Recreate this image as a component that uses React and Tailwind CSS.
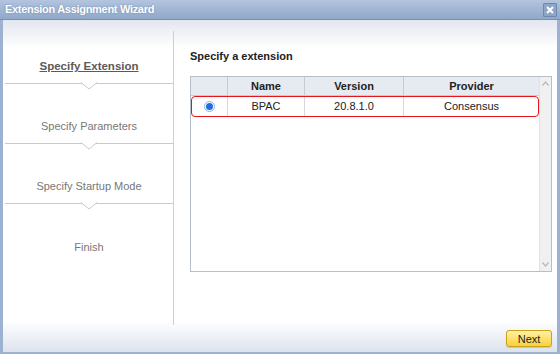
import React from 'react';

const steps = [
  { label: 'Specify Extension', active: true },
  { label: 'Specify Parameters' },
  { label: 'Specify Startup Mode' },
  { label: 'Finish', last: true },
];

const Chevron = () => (
  <svg className="absolute left-1/2 -translate-x-1/2 -bottom-[7px]" width="16" height="8" viewBox="0 0 16 8">
    <polyline points="0,0.5 8,7 16,0.5" fill="#ffffff" stroke="#c9c9c9" strokeWidth="1" />
  </svg>
);

const App = () => {
  return (
    <div className="w-[560px] h-[354px] flex flex-col bg-white font-['Liberation_Sans',Arial,sans-serif] overflow-hidden">
      {/* title bar */}
      <div className="h-[20px] flex items-center justify-between pl-[5px] pr-[3px] bg-[linear-gradient(to_bottom,#b3c4de,#90a8ca)] border-b border-[#7890b8]">
        <span className="text-white text-[11px] tracking-[-0.3px] font-bold [text-shadow:0_0_2px_#6c84ac]">Extension Assignment Wizard</span>
        <div className="w-[14px] h-[14px] flex items-center justify-center bg-[#8ea5c8] border border-[#6f88b0] rounded-[1px]">
          <svg width="8" height="8" viewBox="0 0 8 8">
            <path d="M1 1 L7 7 M7 1 L1 7" stroke="#ffffff" strokeWidth="2" />
          </svg>
        </div>
      </div>

      {/* body */}
      <div className="flex-1 flex flex-col border-l-[3px] border-r-[3px] border-b-[2px] border-[#9db2d2] bg-[linear-gradient(to_bottom,#e2e6ee_0px,#ffffff_28px,#ffffff_300px,#dde3ed_100%)]">
        <div className="flex flex-1">
          {/* steps */}
          <div className="w-[171px] mt-[11px] h-[294px] border-r border-[#cfcfcf] flex flex-col pl-[2px]">
            {steps.map((s) => (
              <div
                key={s.label}
                className={`relative flex flex-col justify-end items-center pb-[9px] ${s.active ? 'h-[53px]' : 'h-[60px]'} ${s.last ? '' : 'border-b border-[#c9c9c9]'}`}
              >
                <span className={`leading-[16px] ${s.active ? 'text-[11.5px] font-bold underline text-[#5a5a5a]' : 'text-[11px] text-[#777777]'}`}>{s.label}</span>
                {!s.last && <Chevron />}
              </div>
            ))}
          </div>

          {/* content */}
          <div className="flex-1 pl-[16px] pr-[5px] pt-[29px]">
            <div className="text-[11px] leading-[14px] font-bold text-[#222222]">Specify a extension</div>
            <div className="mt-[13px] h-[196px] border border-[#b7bec8] flex bg-white">
              <div className="flex-1 flex flex-col">
                <div className="grid grid-cols-[37px_77px_99px_1fr] h-[19px] bg-[#e6ebf2] border-b border-[#c4cbd4] text-[11px] font-bold text-[#222222]">
                  <div className="border-r border-[#c4cbd4]" />
                  <div className="border-r border-[#c4cbd4] flex items-center justify-center">Name</div>
                  <div className="border-r border-[#c4cbd4] flex items-center justify-center">Version</div>
                  <div className="flex items-center justify-center">Provider</div>
                </div>
                <div className="relative grid grid-cols-[37px_77px_99px_1fr] h-[21px] text-[11px] text-[#222222]">
                  <div className="border-r border-[#d4d9e0] flex items-center justify-center">
                    <div className="w-[11px] h-[11px] rounded-full border border-[#8fb1dd] flex items-center justify-center bg-white">
                      <div className="w-[7px] h-[7px] rounded-full bg-[#1f6fe0]" />
                    </div>
                  </div>
                  <div className="border-r border-[#d4d9e0] flex items-center justify-center">BPAC</div>
                  <div className="border-r border-[#d4d9e0] flex items-center justify-center">20.8.1.0</div>
                  <div className="flex items-center justify-center">Consensus</div>
                  <div className="absolute left-0 right-0 top-0 bottom-0 border border-[#e8141b] rounded-[4px]" />
                </div>
              </div>
              <div className="w-[12px] bg-[#f0f0f0] border-l border-[#e2e2e2] flex flex-col items-center justify-between py-[4px]">
                <svg width="7" height="5" viewBox="0 0 7 5">
                  <polyline points="0.5,4.5 3.5,1 6.5,4.5" fill="none" stroke="#b8b8b8" strokeWidth="1.2" />
                </svg>
                <svg width="7" height="5" viewBox="0 0 7 5">
                  <polyline points="0.5,0.5 3.5,4 6.5,0.5" fill="none" stroke="#b8b8b8" strokeWidth="1.2" />
                </svg>
              </div>
            </div>
          </div>
        </div>

        {/* footer */}
        <div className="h-[22px] flex items-start justify-end pr-[5px]">
          <button className="w-[46px] h-[17px] text-[11px] text-[#222222] rounded-[3px] border border-[#c9a21a] bg-[linear-gradient(to_bottom,#fff1a6,#f8d23a)] shadow-[0_1px_1px_rgba(0,0,0,0.15)]">
            Next
          </button>
        </div>
      </div>
    </div>
  );
};

export default App;
